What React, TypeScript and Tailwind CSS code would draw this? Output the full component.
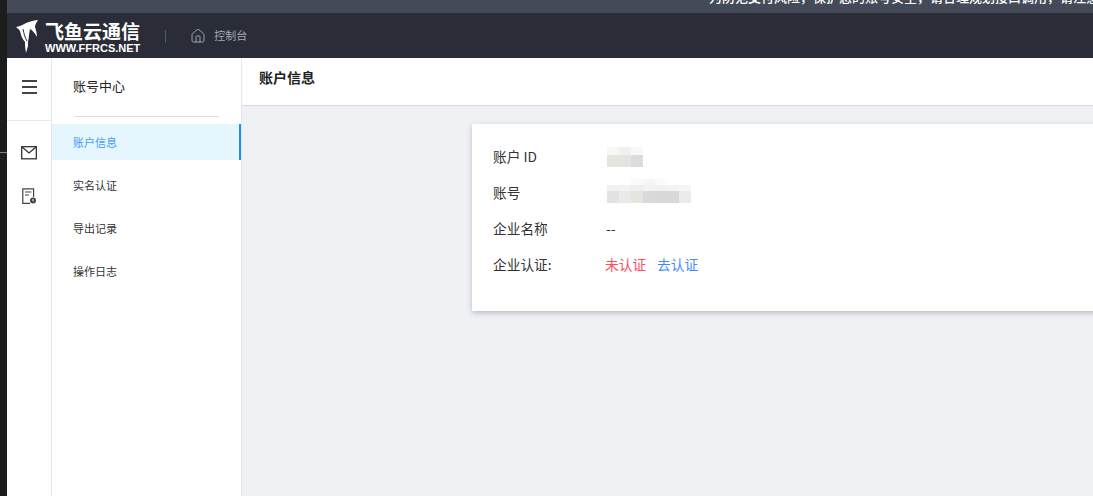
import React from 'react';
import { Home } from 'lucide-react';

const font = { fontFamily: '"Noto Sans CJK SC", "Noto Sans", sans-serif' };

const menuItems = [
    { name: '账户信息', active: true },
    { name: '实名认证', active: false },
    { name: '导出记录', active: false },
    { name: '操作日志', active: false },
];

// mosaic blocks over the masked account values
const idBlocks = [
    { height: 8, colors: ['#f7f7f6', '#f1f1f0', '#f8f8f8'] },
    { height: 12, colors: ['#e6e4de', '#e4e5e3', '#dcdbe0'] },
];
const accountBlocks = [
    { height: 6, colors: ['#ffffff', '#ffffff', '#fafafa', '#f6f6f6', '#fbfbfb', '#ffffff', '#ffffff'] },
    { height: 6, colors: ['#f1f1f0', '#f2f2f2', '#efefed', '#f3f3f3', '#f1f1f1', '#f3f3f3', '#f5f5f5'] },
    { height: 12, colors: ['#e2e2e0', '#e9ebeb', '#e6e4df', '#dadada', '#d8d8d8', '#d8d8d8', '#ebebeb'] },
];

const Mosaic: React.FC<{ rows: { height: number; colors: string[] }[]; className?: string }> = ({ rows, className }) => (
    <div className={`flex flex-col ${className ?? ''}`}>
        {rows.map((row, i) => (
            <div key={i} className="flex">
                {row.colors.map((color, j) => (
                    <div key={j} className="w-[12px]" style={{ backgroundColor: color, height: row.height }} />
                ))}
            </div>
        ))}
    </div>
);

const FishLogo = () => (
    <svg width="24" height="34" viewBox="0 0 24 34" fill="white">
        <path d="M0 7 C6 6 9 3 13 2 C16 1 19 0 22 0 C20 3 19 5 19 7 C20 10 21 14 21 17 C19 13 16 10 14 9 C13 13 13 18 12 22 L12 26 L10 33 L9 26 L9 22 C6 19 5 15 4 11 C3 9 1 8 0 7 Z" />
        <path d="M7 9 C8 14 9 18 11 21" fill="none" stroke="#2a2d37" strokeWidth="1" />
    </svg>
);

const MailIcon = () => (
    <svg width="16" height="14" viewBox="0 0 16 14" fill="none" stroke="#333" strokeWidth="1.3">
        <rect x="0.7" y="0.7" width="14.6" height="12.1" />
        <path d="M1 1 L8 7 L15 1" />
    </svg>
);

const RecordIcon = () => (
    <svg width="15" height="17" viewBox="0 0 15 17" fill="none" stroke="#444" strokeWidth="1.2">
        <path d="M8 15.4 H0.8 V0.8 H11.6 V9" />
        <path d="M3 4 H9.5 M3 7 H7" />
        <circle cx="11" cy="12.6" r="3" fill="#444" stroke="none" />
        <path d="M11 11 V13.4" stroke="white" strokeWidth="1" />
    </svg>
);

export default function App() {
    return (
        <div className="flex h-[496px] w-[1093px] overflow-hidden bg-[#f0f1f5]" style={font}>
            {/* Dark strip (left) */}
            <div className="w-[7px] shrink-0 bg-[#1c1c1c] pt-[152px]">
                <div className="h-px bg-[#808080]" />
            </div>

            <div className="flex flex-col flex-1 min-w-0">
                {/* Notice bar, text is cut off by the top edge */}
                <div className="h-[13px] shrink-0 bg-[#454a59] overflow-hidden flex justify-end">
                    <div className="text-[13px] leading-[13px] -mt-[10px] font-medium text-white whitespace-nowrap -mr-[6px]">
                        为防范支付风险，保护您的账号安全，请合理规划接口调用，请注意
                    </div>
                </div>

                {/* Header */}
                <header className="h-[45px] shrink-0 bg-[#2a2d37] flex items-center">
                    <div className="ml-[9px] mt-[2px]">
                        <FishLogo />
                    </div>
                    <div className="ml-[5px] mt-[3px] flex flex-col items-start text-white">
                        <span className="text-[19px] leading-[21px] font-bold">飞鱼云通信</span>
                        <span className="mt-[1px] text-[11px] leading-[12px] font-bold" style={{ fontFamily: '"Liberation Sans", sans-serif' }}>
                            WWW.FFRCS.NET
                        </span>
                    </div>
                    <div className="ml-[25px] w-px h-[13px] mt-[2px] bg-[#555964]" />
                    <Home size={16} strokeWidth={1.4} className="ml-[24px] text-[#a0a8b8]" />
                    <span className="ml-[8px] text-[11px] text-[#a0a8b8]">控制台</span>
                </header>

                <div className="flex flex-1 min-h-0">
                    {/* Icon rail */}
                    <div className="w-[44px] shrink-0 bg-white flex flex-col items-center">
                        <div className="h-[63px] w-full shrink-0 border-b border-[#e8e9ee] flex flex-col items-center pt-[22px] gap-[4px]">
                            <div className="w-[15px] h-[2px] bg-[#444]" />
                            <div className="w-[15px] h-[2px] bg-[#444]" />
                            <div className="w-[15px] h-[2px] bg-[#444]" />
                        </div>
                        <div className="mt-[25px]">
                            <MailIcon />
                        </div>
                        <div className="mt-[28px]">
                            <RecordIcon />
                        </div>
                    </div>

                    {/* Account menu */}
                    <aside className="w-[191px] shrink-0 bg-white border-l border-r border-[#e6e7ec]">
                        <div className="h-[59px] mx-[22px] border-b border-[#dfe0e7] flex items-center">
                            <span className="text-[13px] text-[#222] -ml-[1px] -mt-[3px]">账号中心</span>
                        </div>
                        <nav className="mt-[7px] flex flex-col gap-[7px]">
                            {menuItems.map((item) => (
                                <div
                                    key={item.name}
                                    className={`h-[36px] pl-[21px] flex items-center text-[11px] ${
                                        item.active
                                            ? 'bg-[#e6f6ff] text-[#4a9cf5] border-r-2 border-[#1890ff]'
                                            : 'text-[#333]'
                                    }`}
                                >
                                    {item.name}
                                </div>
                            ))}
                        </nav>
                    </aside>

                    {/* Main content */}
                    <main className="flex-1 min-w-0 flex flex-col">
                        <div className="h-[48px] shrink-0 bg-white border-b border-[#d8dae2] pl-[17px] pb-[8px] flex items-center">
                            <span className="text-[14px] font-bold text-[#222]">账户信息</span>
                        </div>
                        <div className="pl-[230px] pt-[18px]">
                            <div className="w-[700px] h-[187px] bg-white shadow-[0_2px_5px_rgba(60,64,90,0.3)] pl-[21px] pt-[14px] flex flex-col text-[13.7px] text-[#333]">
                                <div className="h-[36px] flex items-center">
                                    <span className="w-[114px]">账户 ID</span>
                                    <Mosaic rows={idBlocks} className="mt-[2px]" />
                                </div>
                                <div className="h-[36px] flex items-center">
                                    <span className="w-[114px]">账号</span>
                                    <Mosaic rows={accountBlocks} className="mb-[2px]" />
                                </div>
                                <div className="h-[36px] flex items-center">
                                    <span className="w-[113px]">企业名称</span>
                                    <span>--</span>
                                </div>
                                <div className="h-[36px] flex items-center">
                                    <span className="w-[112px]">企业认证:</span>
                                    <span className="text-[#ff4d5e]">未认证</span>
                                    <span className="ml-[11px] text-[#3f8cff]">去认证</span>
                                </div>
                            </div>
                        </div>
                    </main>
                </div>
            </div>
        </div>
    );
}
